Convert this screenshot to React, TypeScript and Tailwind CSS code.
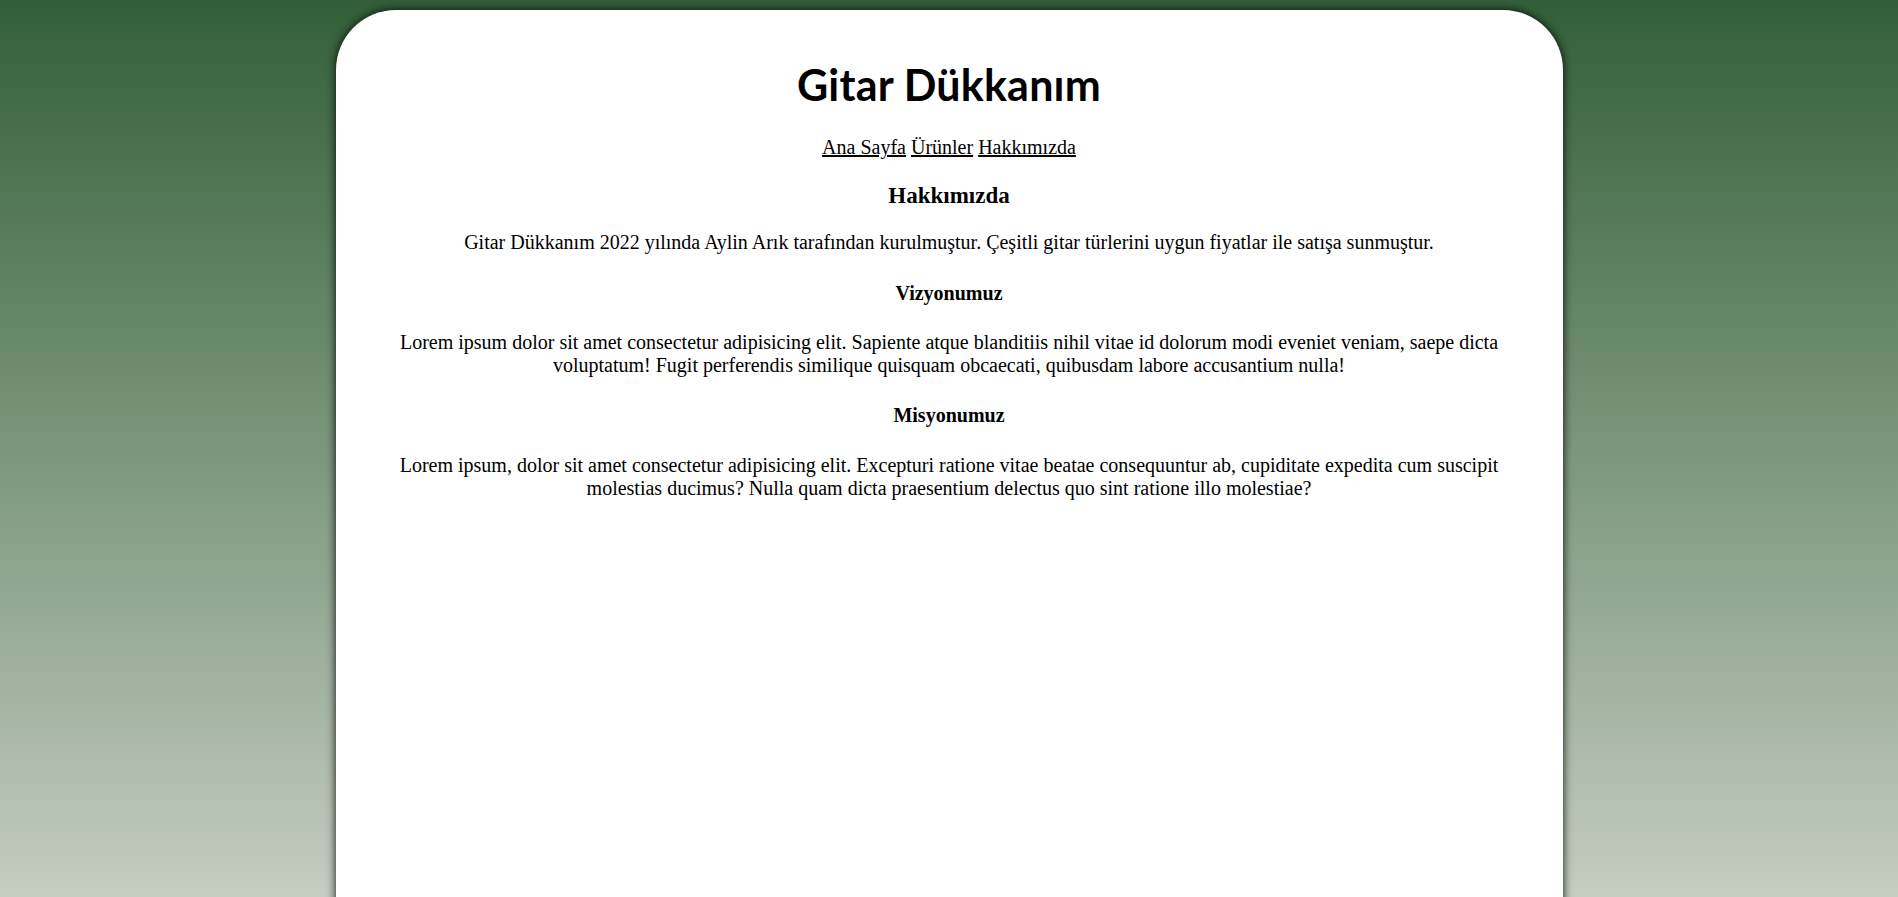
export default function App() {
  return (
    <div className="min-h-[897px] w-full bg-[linear-gradient(to_bottom,#325f38,#c4cdc0)] pt-[10px] overflow-hidden" style={{ height: 897 }}>
      <div className="mx-auto h-[1000px] w-[1227px] rounded-t-[60px] bg-white px-[60px] text-center text-black shadow-[0_0_10px_rgba(0,0,0,0.9)] font-['Liberation_Serif',serif]">
        <h1 className="pt-[52px] text-[43px] leading-[46px] font-bold font-['Lato',sans-serif] tracking-[0.2px]">Gitar Dükkanım</h1>
        <nav className="mt-[28px] text-[20px] leading-[23px]">
          <a href="#" className="underline">Ana Sayfa</a> <a href="#" className="underline">Ürünler</a> <a href="#" className="underline">Hakkımızda</a>
        </nav>
        <h3 className="mt-[24px] text-[23px] leading-[26px] font-bold">Hakkımızda</h3>
        <p className="mt-[22px] text-[20px] leading-[23px]">Gitar Dükkanım 2022 yılında Aylin Arık tarafından kurulmuştur. Çeşitli gitar türlerini uygun fiyatlar ile satışa sunmuştur.</p>
        <h4 className="mt-[28px] text-[20px] leading-[23px] font-bold">Vizyonumuz</h4>
        <p className="mt-[26px] text-[20px] leading-[23px]">Lorem ipsum dolor sit amet consectetur adipisicing elit. Sapiente atque blanditiis nihil vitae id dolorum modi eveniet veniam, saepe dicta voluptatum! Fugit perferendis similique quisquam obcaecati, quibusdam labore accusantium nulla!</p>
        <h4 className="mt-[27px] text-[20px] leading-[23px] font-bold">Misyonumuz</h4>
        <p className="mt-[27px] text-[20px] leading-[23px]">Lorem ipsum, dolor sit amet consectetur adipisicing elit. Excepturi ratione vitae beatae consequuntur ab, cupiditate expedita cum suscipit molestias ducimus? Nulla quam dicta praesentium delectus quo sint ratione illo molestiae?</p>
      </div>
    </div>
  );
}
